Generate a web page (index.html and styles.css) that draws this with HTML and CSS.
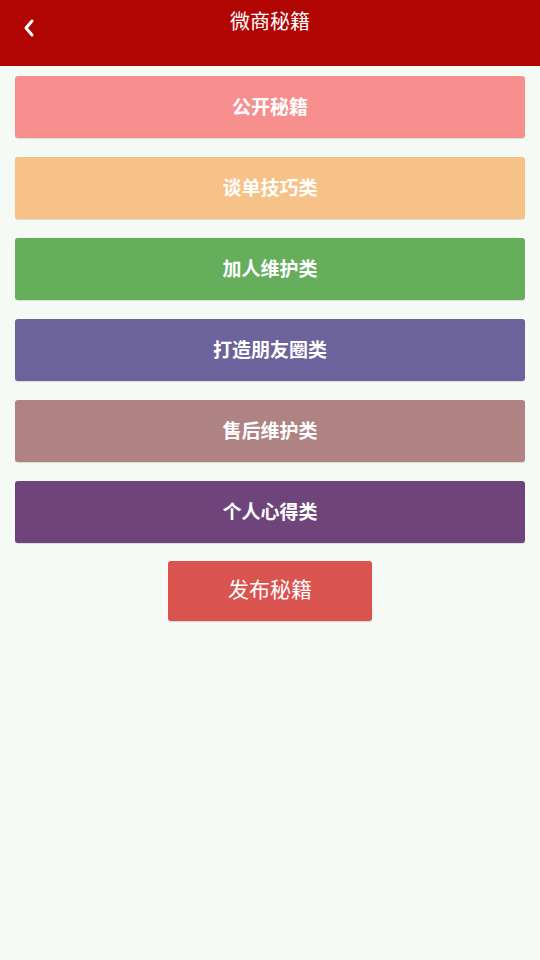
FILE: index.html
```html
<!DOCTYPE html>
<html lang="zh">
<head>
<meta charset="utf-8">
<link rel="stylesheet" href="styles.css">
</head>
<body>
<header class="topbar">
  <span class="back"><svg width="14" height="20" viewBox="0 0 14 20"><path d="M10 3 L4 10 L10 17" fill="none" stroke="#fff" stroke-width="3" stroke-linecap="round" stroke-linejoin="round"/></svg></span>
  <h1 class="title">微商秘籍</h1>
</header>
<main class="list">
  <a class="cat c1">公开秘籍</a>
  <a class="cat c2">谈单技巧类</a>
  <a class="cat c3">加人维护类</a>
  <a class="cat c4">打造朋友圈类</a>
  <a class="cat c5">售后维护类</a>
  <a class="cat c6">个人心得类</a>
  <div class="pub-wrap"><a class="publish">发布秘籍</a></div>
</main>
</body>
</html>
```
FILE: styles.css
```css
html, body { margin: 0; padding: 0; }
body {
  background: #f5fbf4;
  font-family: "Noto Sans CJK SC", "Noto Sans", sans-serif;
  width: 540px;
  height: 960px;
}
.topbar {
  position: relative;
  height: 66px;
  background: #b10504;
  display: flex;
  justify-content: center;
}
.back {
  position: absolute;
  left: 22px;
  top: 18px;
  display: flex;
}
.title {
  margin: 0;
  padding-top: 7px;
  font-size: 20px;
  font-weight: normal;
  color: #fff;
  line-height: 28px;
}
.list {
  padding: 10px 15px 0;
  display: flex;
  flex-direction: column;
  gap: 19px;
}
.cat {
  height: 62px;
  box-sizing: border-box;
  padding-bottom: 4px;
  border-radius: 3px;
  display: flex;
  align-items: center;
  justify-content: center;
  color: #fff;
  font-size: 19px;
  font-weight: bold;
  box-shadow: 0 1px 1px rgba(0,0,0,0.12);
}
.c1 { background: #f78f8f; }
.c2 { background: #f6c287; }
.c3 { background: #66ae5c; }
.c4 { background: #6c639d; }
.c5 { background: #af8283; }
.c6 { background: #6e447b; }
.pub-wrap {
  display: flex;
  justify-content: center;
  margin-top: -1px;
}
.publish {
  width: 204px;
  height: 60px;
  box-sizing: border-box;
  padding-bottom: 6px;
  background: #d9534f;
  border-radius: 3px;
  color: #fff;
  font-size: 21px;
  display: flex;
  align-items: center;
  justify-content: center;
  box-shadow: 0 1px 1px rgba(0,0,0,0.15);
}
```
